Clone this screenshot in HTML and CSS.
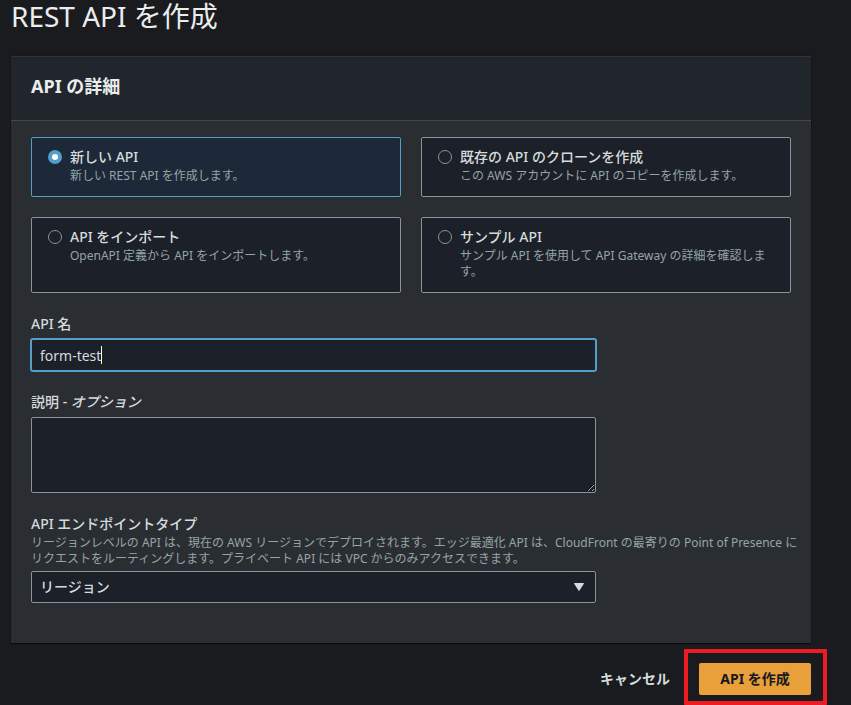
FILE: index.html
```html
<!DOCTYPE html>
<html lang="ja">
<head>
<meta charset="utf-8">
<meta name="viewport" content="width=device-width, initial-scale=1">
<title>REST API を作成</title>
<link rel="stylesheet" href="styles.css">
</head>
<body>
<main class="page">
  <h1 class="page-title">REST API を作成</h1>
  <form class="form">
    <section class="panel">
      <header class="panel-header"><h2 class="panel-title">API の詳細</h2></header>
      <div class="panel-body">
        <div class="tiles" role="radiogroup" aria-label="API の詳細">
          <label class="tile">
            <input class="tile-radio" type="radio" name="source" checked>
            <span class="tile-text"><span class="label">新しい API</span><span class="hint">新しい REST API を作成します。</span></span>
          </label>
          <label class="tile">
            <input class="tile-radio" type="radio" name="source">
            <span class="tile-text"><span class="label">既存の API のクローンを作成</span><span class="hint">この AWS アカウントに API のコピーを作成します。</span></span>
          </label>
          <label class="tile">
            <input class="tile-radio" type="radio" name="source">
            <span class="tile-text"><span class="label">API をインポート</span><span class="hint">OpenAPI 定義から API をインポートします。</span></span>
          </label>
          <label class="tile">
            <input class="tile-radio" type="radio" name="source">
            <span class="tile-text"><span class="label">サンプル API</span><span class="hint">サンプル API を使用して API Gateway の詳細を確認します。</span></span>
          </label>
        </div>
        <div class="field">
          <label class="label" for="name">API 名</label>
          <div class="control active">
            <input class="input" id="name" type="text" value="form-test">
            <span class="caret" aria-hidden="true"></span>
          </div>
        </div>
        <div class="field">
          <label class="label" for="description">説明 - <em>オプション</em></label>
          <div class="control"><textarea class="input textarea" id="description"></textarea></div>
        </div>
        <div class="field">
          <label class="label" for="endpoint">API エンドポイントタイプ</label>
          <p class="hint hint-wide" id="endpoint-hint">リージョンレベルの API は、現在の AWS リージョンでデプロイされます。エッジ最適化 API は、CloudFront の最寄りの Point of Presence にリクエストをルーティングします。プライベート API には VPC からのみアクセスできます。</p>
          <div class="control">
            <select class="input select" id="endpoint" aria-describedby="endpoint-hint"><option>リージョン</option></select>
            <svg class="arrow" viewBox="0 0 10 8" aria-hidden="true"><path d="M0.5 0.5h9L5 7.5z"/></svg>
          </div>
        </div>
      </div>
    </section>
    <footer class="actions">
      <button class="button" type="button">キャンセル</button>
      <div class="highlight"><button class="button primary" type="button">API を作成</button></div>
    </footer>
  </form>
</main>
</body>
</html>
```
FILE: styles.css
```css
* { box-sizing: border-box; }

body {
  margin: 0;
  background: #1a1b1f;
  color: #d5dbdb;
  font: 14px/22px "Noto Sans", "Noto Sans CJK JP", sans-serif;
}

.page { padding: 0 40px 10px 11px; }

.page-title {
  margin: 0;
  color: #eaeded;
  font-size: 28px;
  font-weight: 400;
  line-height: 32px;
}

.form { margin-top: 24px; }

.panel {
  background: #2a2e33;
  border-top: 1px solid #2f3237;
  box-shadow: 0 1px 1px #0c0d10, 0 0 1px #0c0d10;
}

.panel-header {
  padding: 18px 20px 22px;
  background: #21252c;
  border-bottom: 1px solid #414750;
}

.panel-title {
  margin: 0;
  color: #eaeded;
  font-size: 18px;
  font-weight: 700;
  line-height: 23px;
}

.panel-body { padding: 16px 20px 40px; }

.tiles {
  display: grid;
  grid-template-columns: 1fr 1fr;
  gap: 20px;
}

.tile {
  display: flex;
  gap: 8px;
  padding: 8px 16px 12px;
  background: #1c2028;
  border: 1px solid #879596;
  border-radius: 2px;
}

.tile:has(:checked) {
  background: #1d2938;
  border-color: #539fc9;
}

.tile-radio {
  appearance: none;
  flex: none;
  width: 14px;
  height: 14px;
  margin: 4px 0;
  border: 1px solid #879596;
  border-radius: 50%;
}

.tile-radio:checked {
  background: #fff;
  border: 4px solid #539fc9;
}

.label,
.hint { display: block; }

.label { font-weight: 500; }

.hint {
  margin: 0;
  color: #95a5a6;
  font-size: 12px;
  line-height: 16px;
}

.hint-wide { margin-right: -8px; }

.field { margin-top: 20px; }

.control {
  position: relative;
  width: calc(75% - 5px);
  margin-top: 4px;
}

.input {
  display: block;
  width: 100%;
  height: 32px;
  padding: 4px 8px;
  background: #1c2028;
  border: 1px solid #879596;
  border-radius: 2px;
  outline: 0;
  color: #d5dbdb;
  font: inherit;
}

.active .input {
  border-color: #539fc9;
  box-shadow: 0 0 0 1px #539fc9;
}

.caret {
  position: absolute;
  top: 7px;
  left: 70px;
  width: 1px;
  height: 18px;
  background: #fff;
}

.textarea {
  height: 76px;
  resize: vertical;
}

.select {
  appearance: none;
  font-weight: 500;
}

.arrow {
  position: absolute;
  top: 12px;
  right: 12px;
  width: 10px;
  height: 8px;
  fill: #d5dbdb;
  stroke: #d5dbdb;
  stroke-linejoin: round;
  pointer-events: none;
}

.actions {
  display: flex;
  justify-content: flex-end;
  gap: 8px;
  margin-top: 20px;
}

.button {
  height: 32px;
  padding: 0 21px;
  background: transparent;
  border: 0;
  border-radius: 2px;
  color: #d5dbdb;
  font: inherit;
  font-weight: 700;
}

.primary {
  min-width: 112px;
  background: #e9a03b;
  color: #16191f;
}

.highlight { position: relative; }

.highlight::after {
  content: "";
  position: absolute;
  inset: -14px -16px -10px -15px;
  border: 4px solid #ed1c24;
  border-radius: 1px;
  pointer-events: none;
}
```
